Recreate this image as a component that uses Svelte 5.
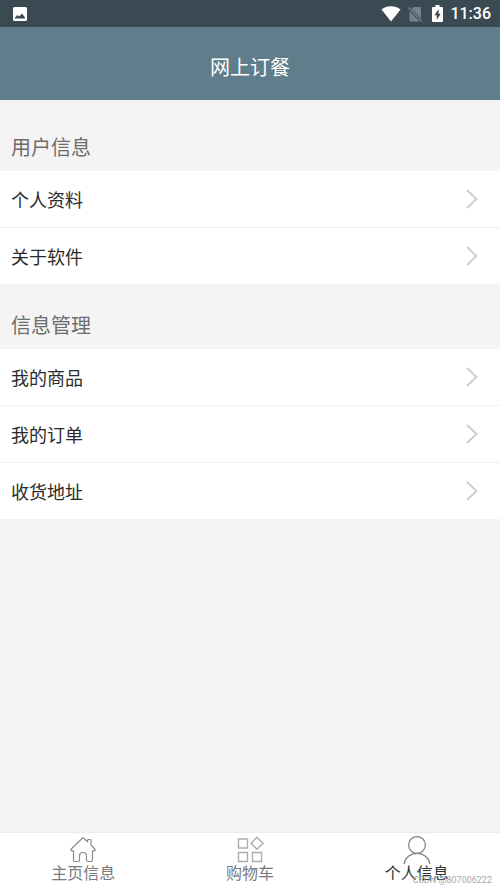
<script lang="ts">
	interface Section {
		title: string;
		items: string[];
	}

	const sections: Section[] = [
		{ title: '用户信息', items: ['个人资料', '关于软件'] },
		{ title: '信息管理', items: ['我的商品', '我的订单', '收货地址'] }
	];

	const tabs = [
		{ id: 'home', label: '主页信息' },
		{ id: 'cart', label: '购物车' },
		{ id: 'me', label: '个人信息' }
	];

	let active = $state('me');
</script>

<div class="app">
	<div class="status-bar">
		<svg class="picture" width="16" height="16" viewBox="0 0 16 16">
			<rect x="1" y="1" width="14" height="14" rx="1.5" fill="#fff" />
			<path d="M3 12.5V11.500L5.500 9l1.700 1.500L10 7.500l3 4v1z" fill="#3b4a52" />
		</svg>
		<div class="indicators">
			<svg width="20" height="16" viewBox="0 0 20 16">
				<path d="M10 15.5.5 3.500C6-.8 14-.8 19.500 3.500z" fill="#fff" />
			</svg>
			<svg class="sim" width="14" height="16" viewBox="0 0 14 16">
				<path d="M5.500 1H12q1 0 1 1v10.500L3.500 3zM1.500 5.200 11.500 15.500H2.500q-1 0-1-1z" fill="#75838a" />
				<path d="M.5 1.500 13.500 15.200" stroke="#75838a" stroke-width="1.300" />
			</svg>
			<svg class="battery" width="11" height="17" viewBox="0 0 11 17">
				<path d="M3.500 0h4v2H10q1 0 1 1v13q0 1-1 1H1q-1 0-1-1V3q0-1 1-1h2.500z" fill="#fff" />
				<path d="M6.500 4 2.500 10.300h2.300V15l3.900-6.300H6.500z" fill="#3b4a52" />
			</svg>
			<span class="time">11:36</span>
		</div>
	</div>

	<header>
		<h1>网上订餐</h1>
	</header>

	<main>
		{#each sections as section}
			<section>
				<h2>{section.title}</h2>
				<ul>
					{#each section.items as item}
						<li>
							<button class="row">
								{item}
								<svg width="12" height="20" viewBox="0 0 12 20" fill="none">
									<path d="M1 1 10.500 10 1 19" stroke="#cdcdcd" stroke-width="1.900" />
								</svg>
							</button>
						</li>
					{/each}
				</ul>
			</section>
		{/each}
	</main>

	<nav>
		{#each tabs as tab}
			<button class="tab" class:active={active === tab.id} onclick={() => (active = tab.id)}>
				<svg width="28" height="28" viewBox="0 0 28 28" fill="none">
					{#if tab.id === 'home'}
						<path
							d="M13 2.500Q14 1.500 15 2.500L18.500 5.700V4.500q0-1 1-1h1.500q1 0 1 1v4.500l3.800 4c.8 1 .4 1.800-.8 1.800h-1.500V24q0 1.500-1.500 1.500h-3q-1.500 0-1.500-1.500v-4a3.500 3.500 0 0 0-7 0v4q0 1.500-1.500 1.500H6Q4.500 25.500 4.500 24v-9.200H3c-1.200 0-1.600-.8-.8-1.800z"
							stroke="#8a8a8a"
							stroke-width="1.200"
						/>
					{:else if tab.id === 'cart'}
						<g stroke="#adadad" stroke-width="1.400">
							<path d="M2.500 3h9v9h-9zM2.500 16.500h9v9h-9zM16.500 16.500h9v9h-9z" />
							<path d="m21 1.300 6 6-6 6-6-6z" />
						</g>
					{:else}
						<g stroke="#858585" stroke-width="1.300">
							<circle cx="14" cy="9" r="8.400" />
							<path d="M1.200 28C2 21.500 7.500 17.400 14 17.400S26 21.500 26.800 28" />
						</g>
					{/if}
				</svg>
				<span>{tab.label}</span>
			</button>
		{/each}
	</nav>
	<div class="watermark">CSDN @807006222</div>
</div>

<style>
	:global(body) {
		margin: 0;
	}
	.app {
		position: relative;
		display: flex;
		flex-direction: column;
		min-height: 100vh;
		background: #f4f4f4;
		font-family: Roboto, 'Noto Sans CJK SC', sans-serif;
	}
	.status-bar {
		display: flex;
		justify-content: space-between;
		align-items: center;
		height: 27px;
		padding: 0 9px 0 12px;
		background: #3b4a52;
	}
	.indicators {
		display: flex;
		align-items: center;
	}
	.sim {
		margin-left: 7px;
	}
	.battery {
		margin: 0 7px 0 10px;
	}
	.time {
		font-size: 16px;
		font-weight: 500;
		line-height: 27px;
		color: #fff;
	}
	header {
		padding: 26px 0 17px;
		background: #607d8b;
		text-align: center;
	}
	h1 {
		margin: 0;
		font-size: 20px;
		font-weight: 400;
		line-height: 30px;
		color: #fff;
	}
	main {
		flex: 1;
		padding-top: 6px;
	}
	h2 {
		margin: 0;
		padding: 27px 11px 8px;
		font-size: 20px;
		font-weight: 400;
		line-height: 30px;
		color: #6d6d6d;
	}
	ul {
		margin: 0;
		padding: 0;
		list-style: none;
		background: #fff;
	}
	li + li {
		border-top: 1px solid #f0f0f0;
	}
	button {
		border: none;
		background: none;
		font-family: inherit;
		cursor: pointer;
	}
	.row {
		display: flex;
		justify-content: space-between;
		align-items: center;
		width: 100%;
		height: 56px;
		padding: 0 22px 0 11px;
		font-size: 18px;
		color: #2b2b2b;
	}
	nav {
		display: flex;
		background: #fff;
		border-top: 1px solid #ececec;
	}
	.tab {
		flex: 1;
		display: flex;
		flex-direction: column;
		align-items: center;
		height: 55px;
		padding: 3px 0 0;
		font-size: 16px;
		line-height: 20px;
		color: #777b80;
	}
	.tab.active {
		color: #333;
	}
	.watermark {
		position: absolute;
		right: 8px;
		bottom: 3px;
		font-size: 9px;
		line-height: 10px;
		color: #a9a9a9;
		pointer-events: none;
	}
</style>
